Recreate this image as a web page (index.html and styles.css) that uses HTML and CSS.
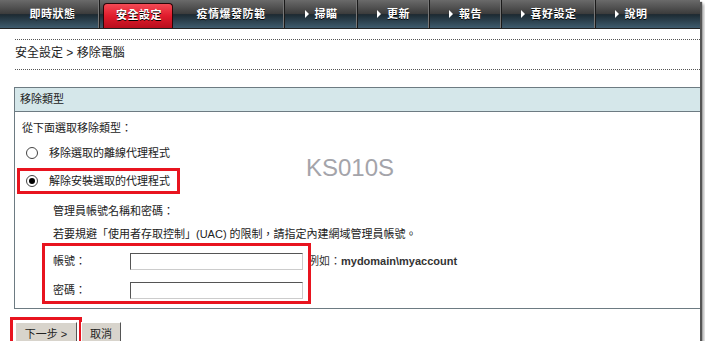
FILE: index.html
```html
<!DOCTYPE html>
<html lang="zh-Hant">
<head>
    <meta charset="UTF-8">
    <title>安全設定 - 移除電腦</title>
    <link rel="stylesheet" href="styles.css">
</head>
<body>
    <div class="frame">
        <ul class="nav">
            <li class="tab w1">即時狀態</li>
            <li class="tab w2 active">安全設定</li>
            <li class="tab w3">疫情爆發防範</li>
            <li class="tab w4"><span class="arrow"></span>掃瞄</li>
            <li class="tab w5"><span class="arrow"></span>更新</li>
            <li class="tab w6"><span class="arrow"></span>報告</li>
            <li class="tab w7"><span class="arrow"></span>喜好設定</li>
            <li class="tab w8"><span class="arrow"></span>說明</li>
        </ul>

        <div class="page">
            <div class="crumb">安全設定 &gt; 移除電腦</div>

            <div class="section">
                <div class="section-head">移除類型</div>
                <div class="section-body">
                    <p class="intro">從下面選取移除類型：</p>
                    <div class="radio-row">
                        <span class="radio"></span>
                        <span>移除選取的離線代理程式</span>
                    </div>
                    <div class="radio-row marked">
                        <span class="radio checked"></span>
                        <span>解除安裝選取的代理程式</span>
                    </div>
                    <div class="watermark">KS010S</div>

                    <div class="admin">
                        <p class="note">管理員帳號名稱和密碼：</p>
                        <p class="note">若要規避「使用者存取控制」(UAC) 的限制，請指定內建網域管理員帳號。</p>
                        <div class="creds">
                            <div class="cred-row">
                                <label>帳號：</label>
                                <input type="text">
                                <span class="hint">例如：<b>mydomain\myaccount</b></span>
                            </div>
                            <div class="cred-row last">
                                <label>密碼：</label>
                                <input type="password">
                            </div>
                            <div class="red-box"></div>
                        </div>
                    </div>
                </div>
            </div>

            <div class="buttons">
                <button class="btn next">下一步 &gt;</button>
                <button class="btn">取消</button>
            </div>
        </div>
    </div>
</body>
</html>
```

FILE: styles.css
```css
body {
    margin: 0;
    background: #fff;
    font-family: "Liberation Sans", "Noto Sans CJK TC", sans-serif;
    font-size: 11px;
    line-height: 15px;
    color: #222;
}

.frame {
    width: 700px;
    height: 341px;
    overflow: hidden;
    background: #fff;
    box-shadow: 2px 2px 1px #555, 4px 4px 3px #aaa;
    position: relative;
}

/* top navigation */
.nav {
    display: flex;
    margin: 0;
    padding: 0;
    list-style: none;
    height: 28px;
    background: linear-gradient(#6a6a6a, #3b3b3b 50%, #1d2a32 52%, #3e5b6d);
    border-bottom: 1px solid #222;
}

.tab {
    display: flex;
    align-items: center;
    justify-content: center;
    gap: 6px;
    height: 28px;
    color: #fff;
    font-weight: bold;
    font-size: 11px;
    letter-spacing: 0.5px;
    text-shadow: 0 1px 0 #000;
    border-right: 1px solid #1a1a1a;
    box-shadow: inset -1px 0 #777;
    box-sizing: border-box;
}

.arrow {
    width: 0;
    height: 0;
    border-top: 4px solid transparent;
    border-bottom: 4px solid transparent;
    border-left: 4px solid #fff;
}

.w1 { width: 100px; padding-left: 6px; }
.w2 { width: 78px; }
.w3 { width: 107px; }
.w4 { width: 73px; }
.w5 { width: 72px; }
.w6 { width: 72px; }
.w7 { width: 94px; }
.w8 { width: 70px; border-right: 0; box-shadow: none; }

.tab.active {
    border: 0;
    box-shadow: none;
    padding: 3px 4px 0;
    background: transparent;
    position: relative;
    z-index: 0;
}

.tab.active::before {
    content: "";
    position: absolute;
    left: 3px;
    right: 5px;
    top: 3px;
    bottom: 0;
    z-index: -1;
    border: 1px solid #2a0508;
    border-bottom: 0;
    border-radius: 4px 4px 0 0;
    background: linear-gradient(#f44a55, #e01c2c 50%, #b80e1d);
}

/* page body */
.page {
    padding: 0 0 0 14px;
}

.crumb {
    margin: 10px 0 0 1px;
    padding: 6px 0 8px;
    border-top: 1px dotted #555;
    border-bottom: 1px dotted #555;
    font-size: 12px;
}

.section {
    margin-top: 17px;
    border-left: 1px solid #6d7b82;
    border-bottom: 1px solid #6d7b82;
}

.section-head {
    height: 23px;
    line-height: 23px;
    padding-left: 5px;
    background: #d5e7ea;
    border-top: 1px solid #6d7b82;
    border-bottom: 1px solid #6d7b82;
}

.section-body {
    position: relative;
    padding: 9px 0 9px 7px;
}

.intro {
    margin: 0 0 7px;
}

.radio-row {
    display: flex;
    align-items: center;
    gap: 11px;
    height: 20px;
    margin-left: 4px;
    margin-bottom: 5px;
    white-space: nowrap;
}

.radio {
    flex: none;
    width: 10px;
    height: 10px;
    border: 1px solid #444;
    border-radius: 50%;
    background: #fff;
    position: relative;
}

.radio.checked::after {
    content: "";
    position: absolute;
    left: 2px;
    top: 2px;
    width: 6px;
    height: 6px;
    border-radius: 50%;
    background: #000;
}

.radio-row.marked {
    box-sizing: border-box;
    width: 163px;
    height: 26px;
    margin-left: -5px;
    margin-bottom: 0;
    padding-left: 6px;
    border: 3px solid #e8141f;
}

.watermark {
    position: absolute;
    left: 291px;
    top: 42px;
    font-size: 24px;
    line-height: 28px;
    color: #a4a4aa;
}

.admin {
    padding-left: 31px;
}

.note {
    margin: 10px 0 0;
}

.note + .note {
    margin-top: 8px;
}

.creds {
    position: relative;
    margin-top: 10px;
}

.cred-row {
    display: flex;
    align-items: center;
    height: 18px;
    margin-bottom: 11px;
}

.cred-row.last {
    margin-bottom: 0;
}

.cred-row label {
    width: 77px;
}

.cred-row input {
    width: 173px;
    height: 17px;
    box-sizing: border-box;
    margin: 0;
    border: 1px solid #555;
    border-right-color: #ccc;
    border-bottom-color: #ccc;
    font-size: 11px;
}

.hint {
    margin-left: 5px;
    color: #333;
}

.red-box {
    position: absolute;
    left: -11px;
    top: -9px;
    width: 263px;
    height: 55px;
    border: 3px solid #e8141f;
}

.buttons {
    display: flex;
    gap: 4px;
    margin-top: 13px;
}

.btn {
    height: 21px;
    padding: 0 8px;
    margin: 0;
    font-family: "Liberation Sans", "Noto Sans CJK TC", sans-serif;
    font-size: 11px;
    color: #222;
    background: #d8d4cc;
    border: 1px solid #fff;
    border-right-color: #555;
    border-bottom-color: #555;
}

.btn.next {
    width: 62px;
    margin-left: 1px;
    outline: 3px solid #e8141f;
    outline-offset: 2px;
}
```
